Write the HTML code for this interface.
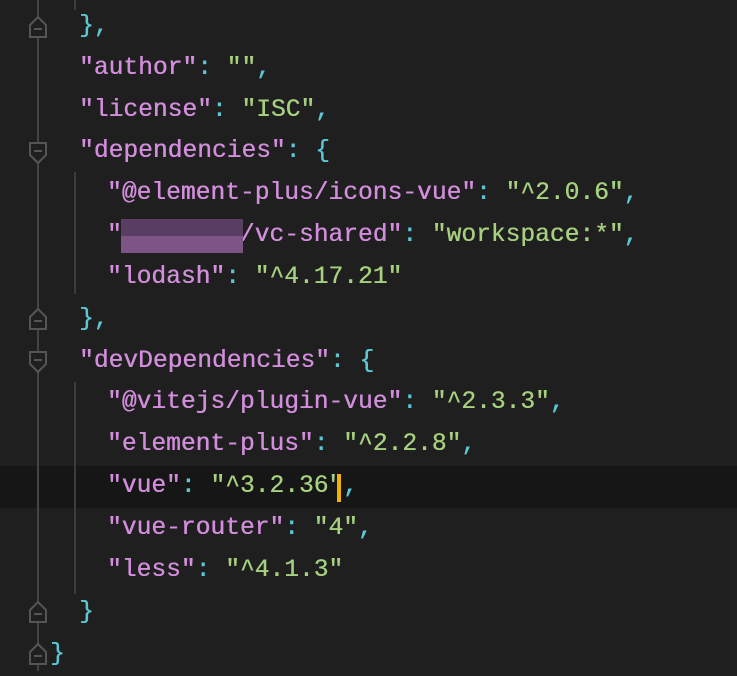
<!DOCTYPE html>
<html><head><meta charset="utf-8"><style>
html,body{margin:0;padding:0;}
body{width:737px;height:671px;background:#1f1f1f;overflow:hidden;position:relative;font-family:"Liberation Mono",monospace;font-size:24.6px;}
.l{position:absolute;left:0;height:41.8px;line-height:41.8px;white-space:pre;color:#5cc6d4;text-shadow:0.4px 0 0 currentColor;}
.k{color:#d28ddc}.s{color:#a6d07f}.p{color:#5cc6d4}
.hl{position:absolute;left:0;width:737px;top:466px;height:42px;background:#161616;}
.gut{position:absolute;left:37px;width:2px;background:#444;top:0;height:671px;}
.ig{position:absolute;left:74px;width:2px;background:#3c3c3c;}
svg.f{position:absolute;left:29px;}
</style></head><body>
<div class="hl"></div>
<div class="gut"></div>
<div class="ig" style="top:0;height:10px"></div>
<div class="ig" style="top:172px;height:122px"></div>
<div class="ig" style="top:382px;height:212px"></div>
<svg class="f" style="top:16px" width="18" height="22"><path d="M1 21V9L9 1L17 9V21Z" fill="#1f1f1f" stroke="#555" stroke-width="2"/><path d="M5 13H13" stroke="#555" stroke-width="2"/></svg>
<svg class="f" style="top:142px" width="18" height="22"><path d="M1 1V13L9 21L17 13V1Z" fill="#1f1f1f" stroke="#555" stroke-width="2"/><path d="M5 9H13" stroke="#555" stroke-width="2"/></svg>
<svg class="f" style="top:308px" width="18" height="22"><path d="M1 21V9L9 1L17 9V21Z" fill="#1f1f1f" stroke="#555" stroke-width="2"/><path d="M5 13H13" stroke="#555" stroke-width="2"/></svg>
<svg class="f" style="top:351px" width="18" height="22"><path d="M1 1V13L9 21L17 13V1Z" fill="#1f1f1f" stroke="#555" stroke-width="2"/><path d="M5 9H13" stroke="#555" stroke-width="2"/></svg>
<svg class="f" style="top:601px" width="18" height="22"><path d="M1 21V9L9 1L17 9V21Z" fill="#1f1f1f" stroke="#555" stroke-width="2"/><path d="M5 13H13" stroke="#555" stroke-width="2"/></svg>
<svg class="f" style="top:643px" width="18" height="22"><path d="M1 21V9L9 1L17 9V21Z" fill="#1f1f1f" stroke="#555" stroke-width="2"/><path d="M5 13H13" stroke="#555" stroke-width="2"/></svg>

<div class="l" style="top:6px;left:79px">},</div>
<div class="l" style="top:48px;left:79px"><span class="k">"author"</span>: <span class="s">""</span>,</div>
<div class="l" style="top:90px;left:79px"><span class="k">"license"</span>: <span class="s">"ISC"</span>,</div>
<div class="l" style="top:131px;left:79px"><span class="k">"dependencies"</span>: {</div>
<div class="l" style="top:173px;left:107px"><span class="k">"@element-plus/icons-vue"</span>: <span class="s">"^2.0.6"</span>,</div>
<div class="l" style="top:215px;left:107px"><span class="k">"        /vc-shared"</span>: <span class="s">"workspace:*"</span>,</div>
<div style="position:absolute;left:121px;top:219px;width:122px;height:17px;background:#5a3d62"></div>
<div style="position:absolute;left:121px;top:236px;width:122px;height:17px;background:#7d5486"></div>
<div class="l" style="top:257px;left:107px"><span class="k">"lodash"</span>: <span class="s">"^4.17.21"</span></div>
<div class="l" style="top:299px;left:79px">},</div>
<div class="l" style="top:341px;left:79px"><span class="k">"devDependencies"</span>: {</div>
<div class="l" style="top:382px;left:107px"><span class="k">"@vitejs/plugin-vue"</span>: <span class="s">"^2.3.3"</span>,</div>
<div class="l" style="top:424px;left:107px"><span class="k">"element-plus"</span>: <span class="s">"^2.2.8"</span>,</div>
<div class="l" style="top:466px;left:107px"><span class="k">"vue"</span>: <span class="s">"^3.2.36"</span>,</div>
<div style="position:absolute;left:337px;top:474px;width:4px;height:28px;background:#f0b400"></div>
<div class="l" style="top:508px;left:107px"><span class="k">"vue-router"</span>: <span class="s">"4"</span>,</div>
<div class="l" style="top:550px;left:107px"><span class="k">"less"</span>: <span class="s">"^4.1.3"</span></div>
<div class="l" style="top:592px;left:79px">}</div>
<div class="l" style="top:634px;left:50px">}</div>
</body></html>
